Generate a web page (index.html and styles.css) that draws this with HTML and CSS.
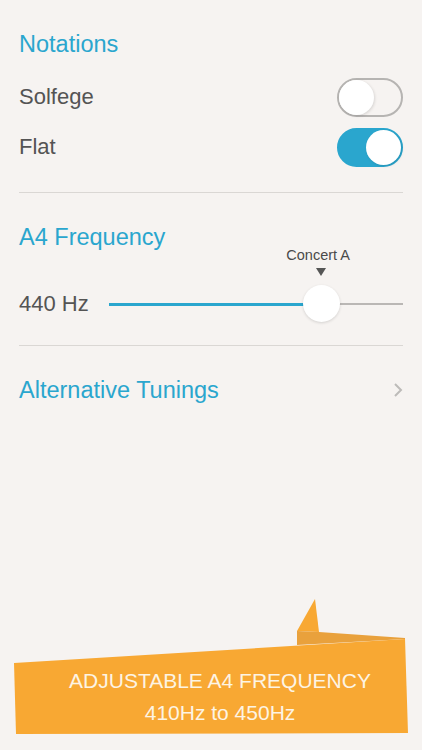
FILE: index.html
```html
<!DOCTYPE html>
<html lang="en">
<head>
	<meta charset="UTF-8">
	<title>Settings</title>
	<link rel="stylesheet" href="styles.css">
</head>
<body>
	<div id="page">
		<div class="section">
			<div class="heading">Notations</div>
			<div class="row">
				<span class="label">Solfege</span>
				<span class="switch"><span class="knob"></span></span>
			</div>
			<div class="row">
				<span class="label">Flat</span>
				<span class="switch on"><span class="knob"></span></span>
			</div>
		</div>
		<div class="section">
			<div class="heading">A4 Frequency</div>
			<div class="slider-row">
				<span class="label hz">440 Hz</span>
				<div class="slider">
					<div class="fill" style="width: 72%"></div>
					<div class="rest"></div>
					<div class="thumb" style="left: 72%">
						<div class="marker">Concert A<span class="tri"></span></div>
					</div>
				</div>
			</div>
		</div>
		<div class="section last">
			<div class="link-row">
				<span class="heading">Alternative Tunings</span>
				<svg class="chevron" width="10" height="16" viewBox="0 0 10 16"><path d="M2 2 L8 8 L2 14" fill="none" stroke="#bdbbb9" stroke-width="2"/></svg>
			</div>
		</div>
		<div id="banner">
			<svg class="shape" width="422" height="151" viewBox="0 0 422 151">
				<polygon points="297,32 315,0 319,33" fill="#f8a833"/>
				<polygon points="297,32 319,33 405,39 405,40 297,46" fill="#e9a13c"/>
				<polygon points="14,64 405,40 408,134 16,135" fill="#f8a833"/>
			</svg>
			<div class="text">
				<div>ADJUSTABLE A4 FREQUENCY</div>
				<div>410Hz to 450Hz</div>
			</div>
		</div>
	</div>
</body>
</html>
```

FILE: styles.css
```css
*{
	margin: 0;
	padding: 0;
}
body{
	background: #f6f3f1;
	font-family: "Liberation Sans", Arial, sans-serif;
	color: #545454;
}
#page{
	width: 422px;
	min-height: 750px;
	display: flex;
	flex-direction: column;
}
.section{
	margin: 0 19px;
	padding-top: 30px;
	border-bottom: 1px solid #dad7d4;
}
.section.last{
	border-bottom: none;
}
.heading{
	font-size: 23.5px;
	line-height: 28px;
	color: #2aa6ce;
}
.label{
	font-size: 22px;
	line-height: 28px;
}
.row{
	display: flex;
	align-items: center;
	justify-content: space-between;
	height: 50px;
}
.heading + .row{
	margin-top: 14px;
}
.section .row:last-child{
	margin-bottom: 20px;
}
.switch{
	width: 66px;
	height: 39px;
	box-sizing: border-box;
	border: 2px solid #b6b4b2;
	border-radius: 20px;
	display: flex;
	align-items: center;
	justify-content: flex-start;
}
.switch .knob{
	width: 35px;
	height: 35px;
	border-radius: 50%;
	background: #fff;
	box-shadow: 1px 1px 3px rgba(0,0,0,0.12);
}
.switch.on{
	background: #2aa6ce;
	border-color: #2aa6ce;
	justify-content: flex-end;
}
.slider-row{
	display: flex;
	align-items: center;
	height: 40px;
	margin-top: 33px;
	margin-bottom: 21px;
}
.hz{
	width: 90px;
}
.slider{
	flex: 1;
	position: relative;
	display: flex;
	align-items: center;
	height: 40px;
}
.fill{
	height: 3px;
	background: #2aa6ce;
}
.rest{
	flex: 1;
	height: 2px;
	background: #bab7b5;
}
.thumb{
	position: absolute;
	top: 1px;
	width: 37px;
	height: 37px;
	margin-left: -18px;
	border-radius: 50%;
	background: #fff;
	box-shadow: 0 1px 3px rgba(0,0,0,0.14);
}
.marker{
	position: absolute;
	bottom: 46px;
	left: 50%;
	width: 80px;
	margin-left: -43px;
	text-align: center;
	font-size: 14.5px;
	line-height: 16px;
	color: #4a4a4a;
}
.tri{
	display: block;
	width: 0;
	height: 0;
	margin: 5px auto 0;
	position: relative;
	left: 3px;
	border-left: 5px solid transparent;
	border-right: 5px solid transparent;
	border-top: 8px solid #555;
}
.link-row{
	display: flex;
	align-items: center;
	justify-content: space-between;
}
#banner{
	margin-top: auto;
	position: relative;
	height: 151px;
}
#banner .shape{
	position: absolute;
	left: 0;
	top: 0;
}
#banner .text{
	position: relative;
	padding-top: 66px;
	padding-left: 18px;
	text-align: center;
	font-size: 21px;
	line-height: 32px;
	color: #fdf4e4;
}
```
